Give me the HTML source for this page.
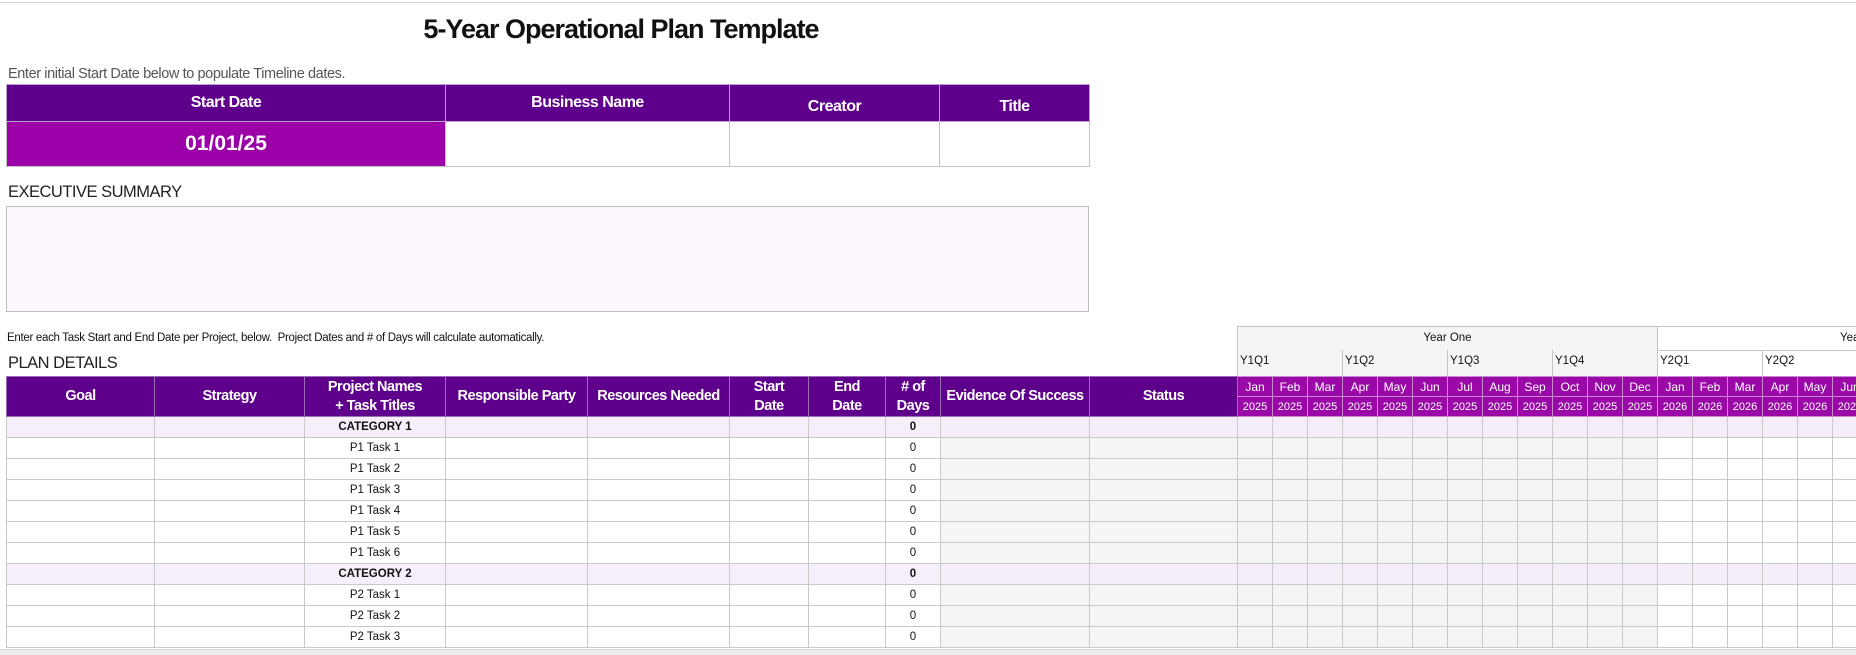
<!DOCTYPE html>
<html><head><meta charset="utf-8"><style>
*{box-sizing:border-box;margin:0;padding:0}
body{width:1856px;height:655px;overflow:hidden;background:#fff;font-family:"Liberation Sans",sans-serif;position:relative;color:#111}
.a{position:absolute}
.topbar{left:0;top:0;width:1856px;height:3px;border-bottom:1px solid #d0d0d0;background:#fff}
.title{left:0;width:1242px;top:14px;text-align:center;font-size:27px;font-weight:bold;letter-spacing:-1px}
.note{left:8px;top:66px;font-size:14.5px;color:#555;letter-spacing:-0.4px}
table{border-collapse:collapse;table-layout:fixed}
.info{left:6px;top:84px;width:1083px}
.info td{border:1px solid #c4c4c4;text-align:center}
.info .h td{background:#5f008c;color:#fff;font-weight:bold;font-size:16px;height:37px;border-color:#b9a0c9;letter-spacing:-0.5px}
.info .d td{height:45px}
.lbl{left:8px;font-size:16.5px;letter-spacing:-0.5px;color:#222}
.sum{left:6px;top:206px;width:1083px;height:106px;border:1px solid #bdbdbd;background:#fdf8fd}
.note2{left:7px;top:332px;font-size:11.5px;letter-spacing:-0.3px}
.plan{left:6px;top:376px;width:1861px}
.plan td{border:1px solid #c9c9c9;text-align:center;font-size:11.5px;height:21px;padding:0;overflow:hidden;white-space:nowrap}
.plan .m td{background:#9a09a8;color:#fff;font-size:12px;border-color:#c98ad0;height:20px}
.plan .m td.y{font-size:11px}
.plan td.hh{background:#5f008c;color:#fff;font-weight:bold;font-size:14.5px;border-color:#9a6fb5;letter-spacing:-0.5px;line-height:19px;white-space:normal}
.plan tr.c td{background:#f6eefa;font-weight:bold}
.plan td.g{background:#f5f5f7}
.plan tr.c td.g{background:#f5eef8}
.plan td.t1{background:#f4f4f4}
.plan tr.c td.t1,.plan tr.c td.t2{background:#f5eef9}
.yr{top:326px;height:25px;border:1px solid #c4c4c4;font-size:11.5px;text-align:center;line-height:23px;white-space:nowrap}
.q{top:350px;height:27px;border-left:1px solid #c4c4c4;border-bottom:1px solid #c4c4c4;font-size:11.5px;line-height:22px;padding-left:2px;white-space:nowrap}
.bot{left:0;top:649px;width:1856px;height:6px;background:#ececec;border-top:1px solid #d8d8d8}
</style></head><body>
<div class="a topbar"></div>
<div class="a title">5-Year Operational Plan Template</div>
<div class="a note">Enter initial Start Date below to populate Timeline dates.</div>
<table class="a info">
<colgroup><col style="width:439px"><col style="width:284px"><col style="width:210px"><col style="width:150px"></colgroup>
<tr class="h"><td>Start Date</td><td>Business Name</td><td style="padding-top:8px">Creator</td><td style="padding-top:8px">Title</td></tr>
<tr class="d"><td style="background:#9c00a8;color:#fff;font-weight:bold;font-size:21px">01/01/25</td><td></td><td></td><td></td></tr>
</table>
<div class="a lbl" style="top:183px">EXECUTIVE SUMMARY</div>
<div class="a sum"></div>
<div class="a note2">Enter each Task Start and End Date per Project, below.&nbsp; Project Dates and # of Days will calculate automatically.</div>
<div class="a lbl" style="top:354px">PLAN DETAILS</div>

<div class="a yr" style="left:1237px;width:421px;background:#f5f5f5">Year One</div>
<div class="a yr" style="left:1657px;width:220px;background:#fff;padding-left:182px;text-align:left">Year Two</div>
<div class="a q" style="left:1237px;width:106px;background:#f5f5f5">Y1Q1</div>
<div class="a q" style="left:1342px;width:106px;background:#f5f5f5">Y1Q2</div>
<div class="a q" style="left:1447px;width:106px;background:#f5f5f5">Y1Q3</div>
<div class="a q" style="left:1552px;width:106px;background:#f5f5f5">Y1Q4</div>
<div class="a q" style="left:1657px;width:106px">Y2Q1</div>
<div class="a q" style="left:1762px;width:106px">Y2Q2</div>

<table class="a plan">
<colgroup><col style="width:148px"><col style="width:150px"><col style="width:141px"><col style="width:142px"><col style="width:142px"><col style="width:79px"><col style="width:77px"><col style="width:55px"><col style="width:149px"><col style="width:148px">
<col style="width:35px"><col style="width:35px"><col style="width:35px"><col style="width:35px"><col style="width:35px"><col style="width:35px"><col style="width:35px"><col style="width:35px"><col style="width:35px"><col style="width:35px"><col style="width:35px"><col style="width:35px"><col style="width:35px"><col style="width:35px"><col style="width:35px"><col style="width:35px"><col style="width:35px"><col style="width:35px"></colgroup>
<tr class="m"><td rowspan="2" class="hh">Goal</td><td rowspan="2" class="hh">Strategy</td><td rowspan="2" class="hh">Project Names<br>+ Task Titles</td><td rowspan="2" class="hh">Responsible Party</td><td rowspan="2" class="hh">Resources Needed</td><td rowspan="2" class="hh">Start<br>Date</td><td rowspan="2" class="hh">End<br>Date</td><td rowspan="2" class="hh"># of<br>Days</td><td rowspan="2" class="hh">Evidence Of Success</td><td rowspan="2" class="hh">Status</td>
<td>Jan</td><td>Feb</td><td>Mar</td><td>Apr</td><td>May</td><td>Jun</td><td>Jul</td><td>Aug</td><td>Sep</td><td>Oct</td><td>Nov</td><td>Dec</td><td>Jan</td><td>Feb</td><td>Mar</td><td>Apr</td><td>May</td><td>Jun</td></tr>
<tr class="m"><td class="y">2025</td><td class="y">2025</td><td class="y">2025</td><td class="y">2025</td><td class="y">2025</td><td class="y">2025</td><td class="y">2025</td><td class="y">2025</td><td class="y">2025</td><td class="y">2025</td><td class="y">2025</td><td class="y">2025</td><td class="y">2026</td><td class="y">2026</td><td class="y">2026</td><td class="y">2026</td><td class="y">2026</td><td class="y">2026</td></tr>
<tr class="c"><td></td><td></td><td>CATEGORY 1</td><td></td><td></td><td></td><td></td><td>0</td><td class="g"></td><td class="g"></td><td class="t1"></td><td class="t1"></td><td class="t1"></td><td class="t1"></td><td class="t1"></td><td class="t1"></td><td class="t1"></td><td class="t1"></td><td class="t1"></td><td class="t1"></td><td class="t1"></td><td class="t1"></td><td class="t2"></td><td class="t2"></td><td class="t2"></td><td class="t2"></td><td class="t2"></td><td class="t2"></td></tr>
<tr><td></td><td></td><td>P1 Task 1</td><td></td><td></td><td></td><td></td><td>0</td><td class="g"></td><td class="g"></td><td class="t1"></td><td class="t1"></td><td class="t1"></td><td class="t1"></td><td class="t1"></td><td class="t1"></td><td class="t1"></td><td class="t1"></td><td class="t1"></td><td class="t1"></td><td class="t1"></td><td class="t1"></td><td></td><td></td><td></td><td></td><td></td><td></td></tr>
<tr><td></td><td></td><td>P1 Task 2</td><td></td><td></td><td></td><td></td><td>0</td><td class="g"></td><td class="g"></td><td class="t1"></td><td class="t1"></td><td class="t1"></td><td class="t1"></td><td class="t1"></td><td class="t1"></td><td class="t1"></td><td class="t1"></td><td class="t1"></td><td class="t1"></td><td class="t1"></td><td class="t1"></td><td></td><td></td><td></td><td></td><td></td><td></td></tr>
<tr><td></td><td></td><td>P1 Task 3</td><td></td><td></td><td></td><td></td><td>0</td><td class="g"></td><td class="g"></td><td class="t1"></td><td class="t1"></td><td class="t1"></td><td class="t1"></td><td class="t1"></td><td class="t1"></td><td class="t1"></td><td class="t1"></td><td class="t1"></td><td class="t1"></td><td class="t1"></td><td class="t1"></td><td></td><td></td><td></td><td></td><td></td><td></td></tr>
<tr><td></td><td></td><td>P1 Task 4</td><td></td><td></td><td></td><td></td><td>0</td><td class="g"></td><td class="g"></td><td class="t1"></td><td class="t1"></td><td class="t1"></td><td class="t1"></td><td class="t1"></td><td class="t1"></td><td class="t1"></td><td class="t1"></td><td class="t1"></td><td class="t1"></td><td class="t1"></td><td class="t1"></td><td></td><td></td><td></td><td></td><td></td><td></td></tr>
<tr><td></td><td></td><td>P1 Task 5</td><td></td><td></td><td></td><td></td><td>0</td><td class="g"></td><td class="g"></td><td class="t1"></td><td class="t1"></td><td class="t1"></td><td class="t1"></td><td class="t1"></td><td class="t1"></td><td class="t1"></td><td class="t1"></td><td class="t1"></td><td class="t1"></td><td class="t1"></td><td class="t1"></td><td></td><td></td><td></td><td></td><td></td><td></td></tr>
<tr><td></td><td></td><td>P1 Task 6</td><td></td><td></td><td></td><td></td><td>0</td><td class="g"></td><td class="g"></td><td class="t1"></td><td class="t1"></td><td class="t1"></td><td class="t1"></td><td class="t1"></td><td class="t1"></td><td class="t1"></td><td class="t1"></td><td class="t1"></td><td class="t1"></td><td class="t1"></td><td class="t1"></td><td></td><td></td><td></td><td></td><td></td><td></td></tr>
<tr class="c"><td></td><td></td><td>CATEGORY 2</td><td></td><td></td><td></td><td></td><td>0</td><td class="g"></td><td class="g"></td><td class="t1"></td><td class="t1"></td><td class="t1"></td><td class="t1"></td><td class="t1"></td><td class="t1"></td><td class="t1"></td><td class="t1"></td><td class="t1"></td><td class="t1"></td><td class="t1"></td><td class="t1"></td><td class="t2"></td><td class="t2"></td><td class="t2"></td><td class="t2"></td><td class="t2"></td><td class="t2"></td></tr>
<tr><td></td><td></td><td>P2 Task 1</td><td></td><td></td><td></td><td></td><td>0</td><td class="g"></td><td class="g"></td><td class="t1"></td><td class="t1"></td><td class="t1"></td><td class="t1"></td><td class="t1"></td><td class="t1"></td><td class="t1"></td><td class="t1"></td><td class="t1"></td><td class="t1"></td><td class="t1"></td><td class="t1"></td><td></td><td></td><td></td><td></td><td></td><td></td></tr>
<tr><td></td><td></td><td>P2 Task 2</td><td></td><td></td><td></td><td></td><td>0</td><td class="g"></td><td class="g"></td><td class="t1"></td><td class="t1"></td><td class="t1"></td><td class="t1"></td><td class="t1"></td><td class="t1"></td><td class="t1"></td><td class="t1"></td><td class="t1"></td><td class="t1"></td><td class="t1"></td><td class="t1"></td><td></td><td></td><td></td><td></td><td></td><td></td></tr>
<tr><td></td><td></td><td>P2 Task 3</td><td></td><td></td><td></td><td></td><td>0</td><td class="g"></td><td class="g"></td><td class="t1"></td><td class="t1"></td><td class="t1"></td><td class="t1"></td><td class="t1"></td><td class="t1"></td><td class="t1"></td><td class="t1"></td><td class="t1"></td><td class="t1"></td><td class="t1"></td><td class="t1"></td><td></td><td></td><td></td><td></td><td></td><td></td></tr>
</table>
<div class="a bot"></div>
</body></html>
